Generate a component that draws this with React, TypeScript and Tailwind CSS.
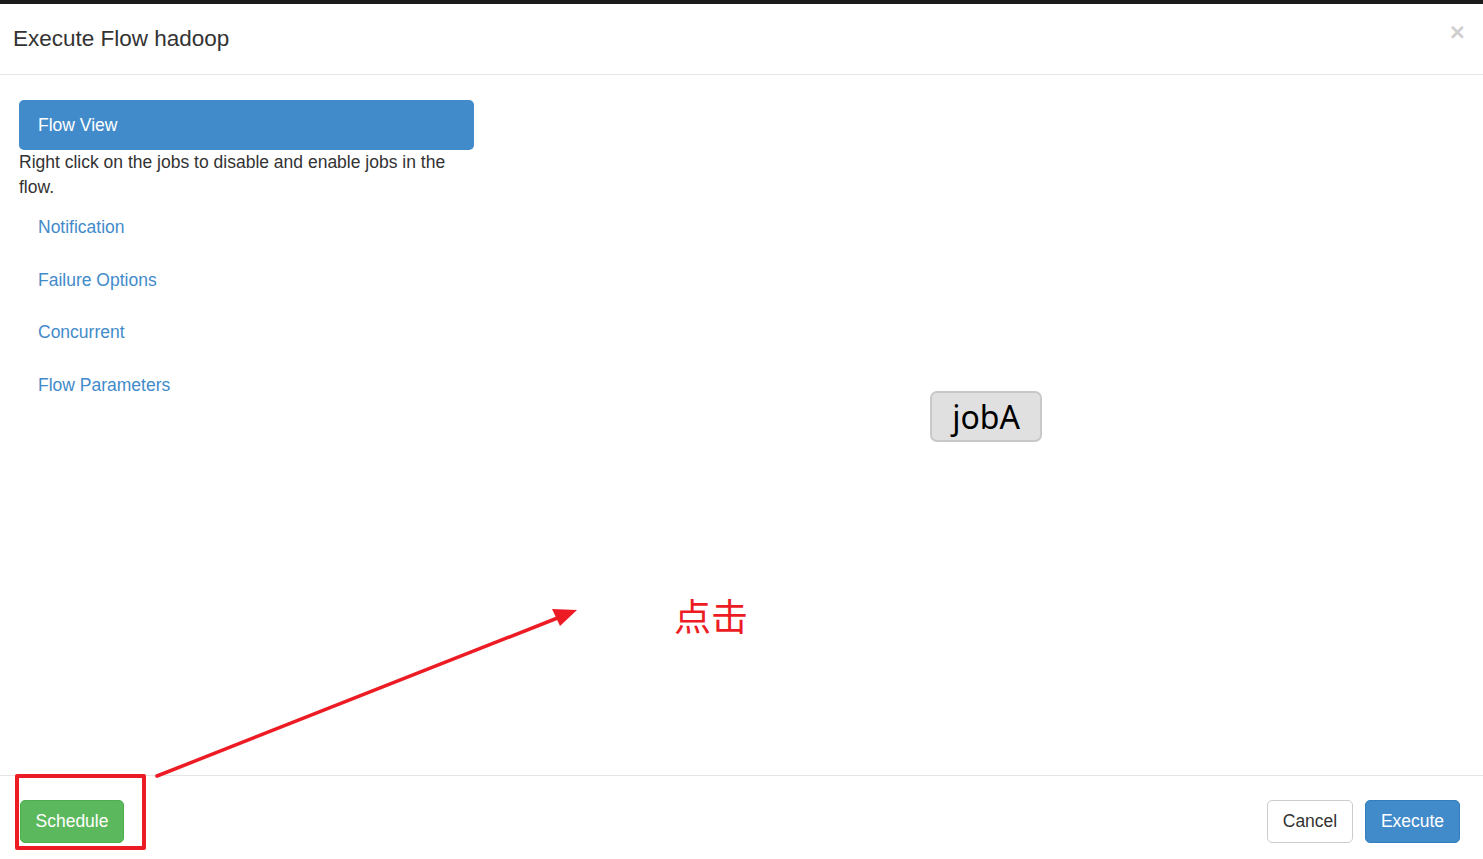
import React from 'react';

const links = ['Notification', 'Failure Options', 'Concurrent', 'Flow Parameters'];

const App: React.FC = () => {
  return (
    <div
      className="relative flex h-[859px] w-[1483px] flex-col overflow-hidden bg-white text-[#333]"
      style={{ fontFamily: '"Liberation Sans", Arial, sans-serif' }}
    >
      <div className="h-1 bg-[#1b1b1b]" />

      {/* Header */}
      <div className="flex h-[71px] items-center justify-between border-b border-[#e5e5e5] pl-[13px] pr-[18px]">
        <h4 className="text-[22.5px] leading-none text-[#333]">Execute Flow hadoop</h4>
        <button className="-mt-[14px] text-[26px] font-bold leading-none text-black/20">×</button>
      </div>

      {/* Body */}
      <div className="relative flex flex-1">
        <div className="w-[474px] pl-[19px] pt-[25px]">
          <div className="flex h-[50px] w-[455px] items-center rounded-[5px] bg-[#428bca] pl-[19px] text-[17.5px] text-white">
            Flow View
          </div>
          <p className="text-[17.5px] leading-[25px] text-[#333]">
            Right click on the jobs to disable and enable jobs in the flow.
          </p>
          <ul className="mt-[0.5px]">
            {links.map((l) => (
              <li key={l} className="mt-[2.5px] flex h-[50px] items-center pl-[19px] text-[17.5px] text-[#428bca]">
                {l}
              </li>
            ))}
          </ul>
        </div>

        {/* Flow graph canvas */}
        <div className="relative flex-1">
          <div
            className="absolute left-[456px] top-[316px] flex h-[51px] w-[112px] items-center justify-center rounded-[7px] border-2 border-[#c8c8c8] bg-[#e0e0e0] text-[32px] text-black"
            style={{ fontFamily: '"Noto Sans", "Open Sans", sans-serif' }}
          >
            jobA
          </div>
        </div>
      </div>

      {/* Footer */}
      <div className="flex h-[84px] items-start justify-between border-t border-[#e5e5e5] pl-[20px] pr-[23px] pt-[24px]">
        <button className="h-[43px] w-[104px] rounded-[5px] border border-[#4cae4c] bg-[#5cb85c] text-[17.5px] text-white">
          Schedule
        </button>
        <div className="flex gap-[12px]">
          <button className="h-[43px] w-[86px] rounded-[5px] border border-[#ccc] bg-white text-[17.5px] text-[#333]">
            Cancel
          </button>
          <button className="h-[43px] w-[95px] rounded-[5px] border border-[#357ebd] bg-[#428bca] text-[17.5px] text-white">
            Execute
          </button>
        </div>
      </div>

      {/* Annotations */}
      <div className="pointer-events-none absolute left-[15px] top-[774px] h-[76px] w-[131px] rounded-[2px] border-4 border-[#ed1c24]" />
      <svg className="pointer-events-none absolute left-0 top-0" width="1483" height="859">
        <line x1="157" y1="776" x2="560" y2="617" stroke="#ed1c24" strokeWidth="3.5" strokeLinecap="round" />
        <polygon points="577,610 552,609 560,626" fill="#ed1c24" />
      </svg>
      <div
        className="pointer-events-none absolute left-[674px] top-[597px] text-[37px] leading-none text-[#ed1c24]"
        style={{ fontFamily: '"Noto Sans CJK SC", sans-serif' }}
      >
        点击
      </div>
    </div>
  );
};

export default App;
